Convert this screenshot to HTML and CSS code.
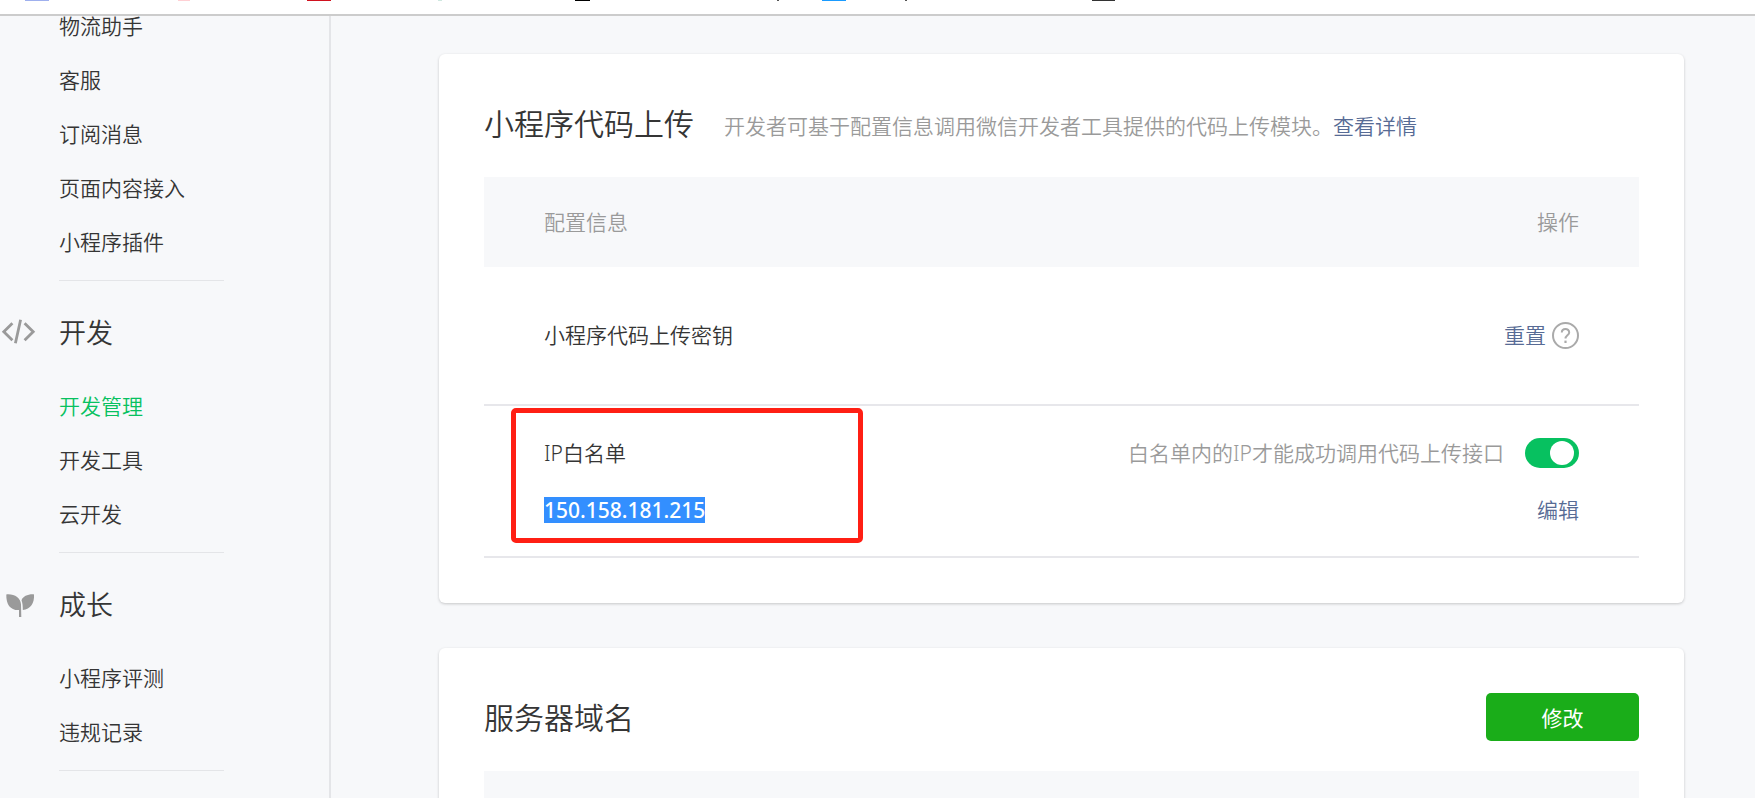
FILE: index.html
```html
<!DOCTYPE html>
<html lang="zh-CN">
<head>
    <meta charset="UTF-8">
    <meta name="viewport" content="width=device-width, initial-scale=1.0">
    <title>开发管理</title>
    <link rel="stylesheet" href="styles.css">
</head>
<body>

    <div class="bookmark-bar">
        <svg width="1200" height="1" aria-hidden="true">
            <rect x="25" width="24" height="1" fill="#9fb0ee"/>
            <rect x="178" width="12" height="1" fill="#ffd0d4"/>
            <rect x="307" width="24" height="1" fill="#d0121f"/>
            <rect x="438" width="4" height="1" fill="#cfe8e0"/>
            <rect x="575" width="15" height="1" fill="#000"/>
            <rect x="777" width="2" height="1" fill="#555"/>
            <rect x="822" width="24" height="1" fill="#1a9bff"/>
            <rect x="905" width="2" height="1" fill="#555"/>
            <rect x="1092" width="23" height="1" fill="#333"/>
        </svg>
    </div>

    <div class="layout">
        <nav class="sidebar">
            <ul class="menu">
                <li><a class="first" href="#">物流助手</a></li>
                <li><a href="#">客服</a></li>
                <li><a href="#">订阅消息</a></li>
                <li><a href="#">页面内容接入</a></li>
                <li><a href="#">小程序插件</a></li>
            </ul>

            <h2 class="menu-title">
                <svg class="menu-icon" width="36" height="30" viewBox="0 0 36 30" aria-hidden="true">
                    <path d="M12.4 5.2 L3.8 13.7 L12.4 22.2 M20.6 1.7 L15.4 25.3 M24.6 5.2 L33.2 13.7 L24.6 22.2" fill="none" stroke="#9a9a9a" stroke-width="2.8"/>
                </svg>
                开发
            </h2>
            <ul class="menu">
                <li><a class="active" href="#">开发管理</a></li>
                <li><a href="#">开发工具</a></li>
                <li><a href="#">云开发</a></li>
            </ul>

            <h2 class="menu-title">
                <svg class="menu-icon" width="36" height="30" viewBox="0 0 36 30" fill="#9a9a9a" aria-hidden="true">
                    <path d="M6.3 4.4 C14 3.6 20.8 7.6 21 14.5 L21.3 27 H19 V20 C11 20.5 6 15 6.3 4.4 Z"/>
                    <path d="M34 4.4 C28 4 23 6.4 21.5 10.2 C22.6 13 22.8 16 22.8 19.9 C30.5 19.3 34.6 13 34 4.4 Z"/>
                </svg>
                成长
            </h2>
            <ul class="menu">
                <li><a href="#">小程序评测</a></li>
                <li><a href="#">违规记录</a></li>
            </ul>
        </nav>

        <main class="content">
            <section class="card">
                <div class="card-head">
                    <h3>小程序代码上传</h3>
                    <p class="desc">开发者可基于配置信息调用微信开发者工具提供的代码上传模块。<a href="#">查看详情</a></p>
                </div>
                <table class="config">
                    <thead>
                        <tr>
                            <th>配置信息</th>
                            <th class="ops">操作</th>
                        </tr>
                    </thead>
                    <tbody>
                        <tr class="row-key">
                            <td>小程序代码上传密钥</td>
                            <td class="ops">
                                <div class="line">
                                    <a href="#">重置</a>
                                    <svg class="help" width="27" height="28" viewBox="0 0 27 28" fill="none" stroke="#aaa" aria-hidden="true">
                                        <circle cx="13.5" cy="14.5" r="12.5" stroke-width="2"/>
                                        <path d="M9.8 11.6 C9.8 6.9 17.2 6.9 17.2 11.4 C17.2 14.2 13.5 14.4 13.5 17.6" stroke-width="2"/>
                                        <path d="M13.5 19.6 V22" stroke-width="2.2"/>
                                    </svg>
                                </div>
                            </td>
                        </tr>
                        <tr class="row-ip">
                            <td>
                                <div class="mark"></div>
                                <div class="line">IP白名单</div>
                                <div class="line"><span class="selected">150.158.181.215</span></div>
                            </td>
                            <td class="ops">
                                <div class="line">
                                    <label class="tips" for="ip-switch">白名单内的IP才能成功调用代码上传接口</label>
                                    <input class="switch" type="checkbox" id="ip-switch" checked>
                                </div>
                                <div class="line"><a href="#">编辑</a></div>
                            </td>
                        </tr>
                    </tbody>
                </table>
            </section>

            <section class="card">
                <div class="card-head">
                    <h3>服务器域名</h3>
                    <button class="btn" type="button">修改</button>
                </div>
                <div class="table-head"></div>
            </section>
        </main>
    </div>

</body>
</html>
```
FILE: styles.css
```css
* {
    box-sizing: border-box;
}

body {
    margin: 0;
    height: 100vh;
    display: flex;
    flex-direction: column;
    overflow: hidden;
    background: #f7f8fa;
    color: #353535;
    font-family: "Noto Sans", "Noto Sans CJK SC", sans-serif;
    font-size: 21px;
    font-weight: 350;
    line-height: 30px;
}

a {
    color: #576b95;
    text-decoration: none;
}

h2, h3, p, ul {
    margin: 0;
    padding: 0;
    font-weight: 350;
}

/* 顶部书签栏 */
.bookmark-bar {
    flex: none;
    height: 16px;
    background: #fff;
    border-bottom: 2px solid #ccc;
    overflow: hidden;
}

.bookmark-bar svg {
    display: block;
}

.layout {
    flex: 1;
    min-height: 0;
    display: flex;
    overflow: hidden;
}

/* 左侧菜单 */
.sidebar {
    flex: none;
    width: 331px;
    border-right: 2px solid #e4e5e8;
    overflow: hidden;
}

.menu {
    list-style: none;
    margin: 0 105px 0 59px;
    padding-bottom: 10px;
    border-bottom: 1px solid #e4e5e8;
}

.menu a {
    display: block;
    padding-bottom: 2px;
    line-height: 52px;
    color: #353535;
}

.menu a.first {
    padding-bottom: 18px;
    line-height: 20px;
}

.menu a.active {
    color: #07c160;
}

.menu-title {
    display: flex;
    align-items: center;
    gap: 23px;
    padding: 25px 0 20px;
    font-size: 27px;
    line-height: 54px;
}

.menu-icon {
    flex: none;
}

/* 右侧内容 */
.content {
    flex: 1;
    padding: 38px 71px 0 108px;
}

.card {
    margin-bottom: 45px;
    padding: 45px;
    background: #fff;
    border-radius: 6px;
    box-shadow: 0 1px 3px rgba(0, 0, 0, 0.2);
}

.card-head {
    display: flex;
    align-items: center;
    gap: 30px;
    height: 48px;
    margin-bottom: 30px;
}

.card-head h3 {
    padding-top: 2px;
    font-size: 30px;
    line-height: 46px;
}

.desc {
    padding-top: 6px;
    color: #9a9a9a;
}

.btn {
    width: 153px;
    height: 48px;
    margin-left: auto;
    padding: 2px 0 0;
    border: none;
    border-radius: 5px;
    background: #1aad19;
    color: #fff;
    font: inherit;
    font-weight: 400;
    cursor: pointer;
}

/* 配置表格 */
.config {
    width: 100%;
    border-collapse: separate;
    border-spacing: 0;
}

.config th,
.config td {
    padding: 30px 60px;
    text-align: left;
    font-weight: 350;
}

.config th {
    background: #f7f8fa;
    color: #9a9a9a;
}

.config td {
    position: relative;
    border-bottom: 2px solid #e7e7eb;
}

.config .ops {
    text-align: right;
}

.config .row-key td {
    padding-top: 53px;
    padding-bottom: 54px;
}

.config .row-ip td {
    padding-top: 32px;
    padding-bottom: 31px;
}

.line {
    display: flex;
    align-items: center;
    height: 30px;
}

.line + .line {
    margin-top: 27px;
}

.ops .line {
    justify-content: flex-end;
}

.help {
    margin-left: 6px;
}

.tips {
    color: #9a9a9a;
}

.selected {
    background: #338fff;
    color: #fff;
    font-weight: 500;
    line-height: 26px;
}

/* 红色标注框 */
.mark {
    position: absolute;
    top: 2px;
    left: 27px;
    width: 352px;
    height: 135px;
    border: 5px solid #ff1f14;
    border-radius: 5px;
}

/* 开关 */
.switch {
    appearance: none;
    flex: none;
    display: flex;
    width: 54px;
    height: 30px;
    margin: 0 0 0 21px;
    padding: 3px 5px;
    border-radius: 15px;
    background: #ccc;
    cursor: pointer;
}

.switch::before {
    content: "";
    width: 24px;
    height: 24px;
    border-radius: 50%;
    background: #fff;
}

.switch:checked {
    justify-content: flex-end;
    background: #07c160;
}

.table-head {
    height: 90px;
    background: #f7f8fa;
}
```
